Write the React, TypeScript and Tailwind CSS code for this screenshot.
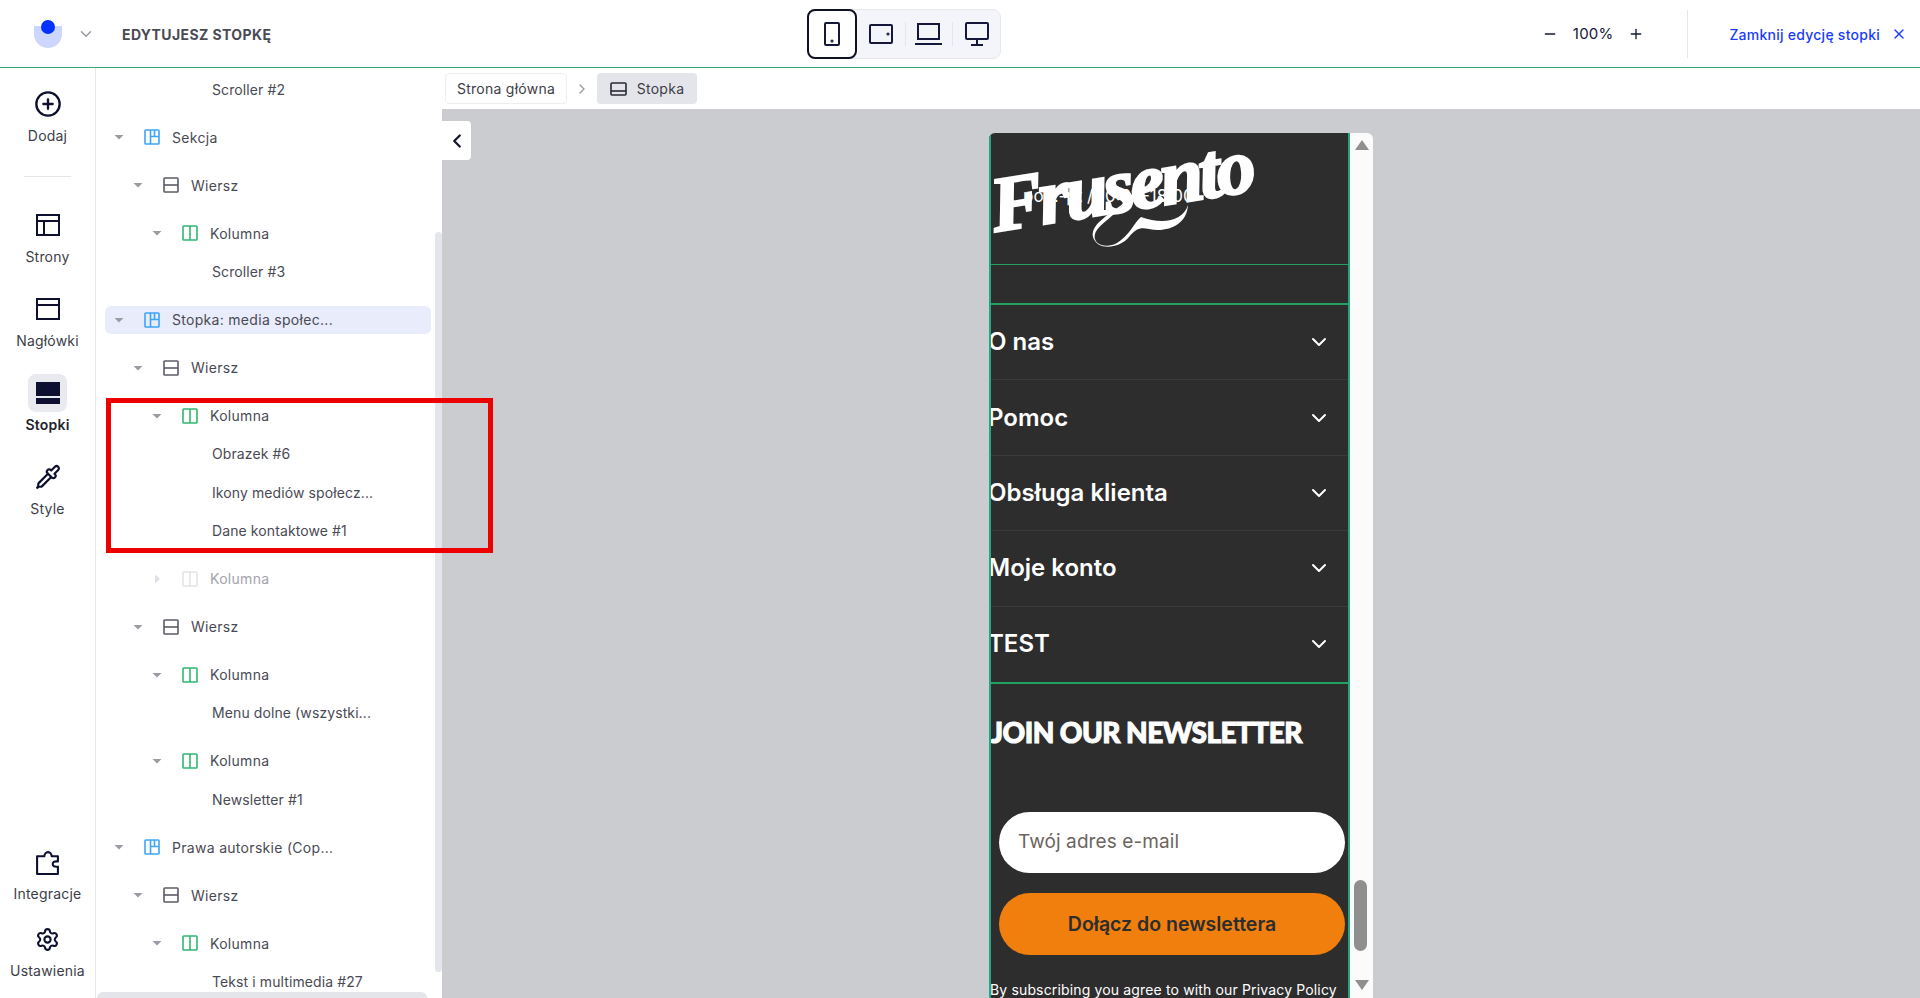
import { ChevronDown, ChevronLeft, ChevronRight, CirclePlus, Minus, Pipette, Plus, Settings, X } from "lucide-react"
import type { ReactNode } from "react"

const ui = "font-['Inter',sans-serif]"

type Kind = "section" | "row" | "col"
type Item =
  | { type: "branch"; depth: 0 | 1 | 2; kind: Kind; label: string; active?: boolean; dim?: boolean; closed?: boolean }
  | { type: "leaves"; labels: string[] }

const tree: Item[] = [
  { type: "leaves", labels: ["Scroller #2"] },
  { type: "branch", depth: 0, kind: "section", label: "Sekcja" },
  { type: "branch", depth: 1, kind: "row", label: "Wiersz" },
  { type: "branch", depth: 2, kind: "col", label: "Kolumna" },
  { type: "leaves", labels: ["Scroller #3"] },
  { type: "branch", depth: 0, kind: "section", label: "Stopka: media społec...", active: true },
  { type: "branch", depth: 1, kind: "row", label: "Wiersz" },
  { type: "branch", depth: 2, kind: "col", label: "Kolumna" },
  { type: "leaves", labels: ["Obrazek #6", "Ikony mediów społecz...", "Dane kontaktowe #1"] },
  { type: "branch", depth: 2, kind: "col", label: "Kolumna", dim: true, closed: true },
  { type: "branch", depth: 1, kind: "row", label: "Wiersz" },
  { type: "branch", depth: 2, kind: "col", label: "Kolumna" },
  { type: "leaves", labels: ["Menu dolne (wszystki..."] },
  { type: "branch", depth: 2, kind: "col", label: "Kolumna" },
  { type: "leaves", labels: ["Newsletter #1"] },
  { type: "branch", depth: 0, kind: "section", label: "Prawa autorskie (Cop..." },
  { type: "branch", depth: 1, kind: "row", label: "Wiersz" },
  { type: "branch", depth: 2, kind: "col", label: "Kolumna" },
  { type: "leaves", labels: ["Tekst i multimedia #27"] },
]

const accordion = ["O nas", "Pomoc", "Obsługa klienta", "Moje konto", "TEST"]

function KindIcon({ kind, dim }: { kind: Kind; dim?: boolean }) {
  const color = dim ? "#e4e5ea" : kind === "section" ? "#3ea6f5" : kind === "row" ? "#5c5c66" : "#2fb872"
  return (
    <svg width="16" height="16" viewBox="0 0 16 16" fill="none" stroke={color} strokeWidth="1.6" className="shrink-0">
      <rect x="1" y="1" width="14" height="14" rx="0.8" />
      {kind === "section" && <path d="M6.5 1v14M6.5 7.5H15M10.5 1v6.5" />}
      {kind === "row" && <path d="M1 8h14" />}
      {kind === "col" && <path d="M8 1v14" />}
    </svg>
  )
}

function Caret({ closed, dim }: { closed?: boolean; dim?: boolean }) {
  return (
    <svg width="10" height="10" viewBox="0 0 10 10" className="shrink-0" fill={dim ? "#dfe0e5" : "#9b9ba3"}>
      {closed ? <path d="M3 0.5 8 5 3 9.5z" /> : <path d="M0.5 3h9L5 7.5z" />}
    </svg>
  )
}

function Branch({ item }: { item: Extract<Item, { type: "branch" }> }) {
  const pad = item.depth === 0 ? "pl-[9px]" : item.depth === 1 ? "pl-[28px]" : "pl-[47px]"
  return (
    <div className="h-[48px] flex items-center ml-[9px] w-[326px]">
      <div className={`h-[28px] w-full flex items-center rounded-md ${pad} ${item.active ? "bg-[#e9ecfb]" : ""}`}>
        <Caret closed={item.closed} dim={item.dim} />
        <span className="ml-[20px]">
          <KindIcon kind={item.kind} dim={item.dim} />
        </span>
        <span className={`ml-[12px] text-[14px] tracking-[0.3px] whitespace-nowrap ${item.dim ? "text-[#a3a3ab]" : "text-[#4a4a55]"}`}>{item.label}</span>
      </div>
    </div>
  )
}

function RailItem({ icon, label, active, short }: { icon: ReactNode; label: string; active?: boolean; short?: boolean }) {
  return (
    <div className={`flex flex-col items-center pt-[6px] ${short ? "h-[77px]" : "h-[84px]"}`}>
      <div className={`w-[39px] h-[38px] flex items-center justify-center rounded-lg text-[#0d1030] ${active ? "bg-[#e9eaef]" : ""}`}>{icon}</div>
      <div className={`mt-[3px] text-[14px] tracking-[0.2px] leading-5 whitespace-nowrap ${active ? "font-semibold text-[#23232b]" : "text-[#3d3d48]"}`}>{label}</div>
    </div>
  )
}

function Rail() {
  const box = { width: 24, height: 24, viewBox: "0 0 24 24", fill: "none", stroke: "currentColor", strokeWidth: 2 }
  return (
    <aside className="w-[96px] shrink-0 border-r border-[#e5e6ea] flex flex-col pt-[11px]">
      <RailItem label="Dodaj" icon={<CirclePlus size={28} strokeWidth={2} />} />
      <div className="mt-[13px] mx-[24px] h-px bg-[#e5e6ea]" />
      <div className="mt-[23px]">
        <RailItem
          label="Strony"
          icon={
            <svg {...box}>
              <rect x="1" y="2" width="22" height="20" />
              <path d="M1 8h22M8 8v14" />
            </svg>
          }
        />
        <RailItem
          label="Nagłówki"
          icon={
            <svg {...box}>
              <rect x="1" y="2" width="22" height="20" />
              <path d="M1 8h22" />
            </svg>
          }
        />
        <RailItem
          active
          label="Stopki"
          icon={
            <svg width="24" height="22" viewBox="0 0 24 22" fill="currentColor">
              <path d="M0 0h24v14H0zM0 16h24v6H0z" />
            </svg>
          }
        />
        <RailItem label="Style" icon={<Pipette size={26} strokeWidth={2} />} />
      </div>
      <div className="mt-auto pb-[7px]">
        <RailItem
          short
          label="Integracje"
          icon={
            <svg {...box} width={25} height={25} strokeLinejoin="round">
              <path d="M2 23V6h7c0-2 1.5-4 3.5-4S16 4 16 6h6v5c-4-.5-5 1-5 2.5s1 3 5 2.5v7z" />
            </svg>
          }
        />
        <RailItem short label="Ustawienia" icon={<Settings size={25} strokeWidth={2} />} />
      </div>
    </aside>
  )
}

function TreePanel() {
  return (
    <div className="w-[346px] shrink-0 relative overflow-hidden pt-[2px]">
      {tree.map((item, i) =>
        item.type === "branch" ? (
          <Branch key={i} item={item} />
        ) : (
          <div key={i} className={`mb-[5px] ${i === 0 ? "" : "-mt-[5px]"}`}>
            {item.labels.map((label) => (
              <div key={label} className="h-[38.33px] flex items-center pl-[116px] text-[14px] tracking-[0.1px] text-[#4a4a55] whitespace-nowrap">
                {label}
              </div>
            ))}
          </div>
        ),
      )}
      <div className="absolute right-0 top-[164px] h-[740px] w-[7px] rounded-full bg-[#e4e5ea]" />
      <div className="absolute left-px bottom-0 h-[6px] w-[330px] rounded-t-md bg-[#e4e5ea]" />
    </div>
  )
}

function Logo() {
  return (
    <div className="absolute left-0 top-0 w-[300px] h-[130px] pointer-events-none">
      <svg width="300" height="130" viewBox="0 0 300 130" fill="none" className="absolute left-0 top-0">
        <path d="M135 68C124 84 108 90 104 101C101 112 116 116 126 110C138 103 143 90 150 84C172 92 192 88 197 72C196 92 176 100 158 96C150 94 145 95 138 104C128 116 106 118 102 104C99 90 122 80 135 68Z" fill="white" />
      </svg>
      <span className="absolute left-0 top-[34px] rotate-[-9deg] origin-left font-['Liberation_Serif',serif] italic font-bold text-[78px] leading-none tracking-[-4px] text-white [-webkit-text-stroke:2.5px_white] whitespace-nowrap">
        Frusento
      </span>
    </div>
  )
}

function Preview() {
  return (
    <div className="ml-[547px] mt-[24px] w-[384px] flex-1 flex min-h-0 rounded-t-md overflow-hidden">
      <div className="w-[361px] bg-[#2d2d2d] text-white border-x-2 border-[#22a77f] overflow-hidden font-['Inter',sans-serif]">
        <div className="relative h-[132px] border-b border-[#22a160]">
          <div className="absolute left-[32px] top-[53px] text-[17px] leading-5 whitespace-nowrap">pon.-pt / 10:00-18:00</div>
          <Logo />
        </div>
        <div className="h-[38px] -mx-[2px] border-x-2 border-[#3a9df0]" />
        <div className="-mx-[2px] border-y-2 border-[#22a160]">
          {accordion.map((label, i) => (
            <div key={label} className={`h-[75.4px] flex items-center justify-between pr-[19px] ${i < 4 ? "border-b border-[#3a3a3a]" : ""}`}>
              <span className="-ml-px text-[24px] font-semibold">{label}</span>
              <ChevronDown size={24} strokeWidth={2} />
            </div>
          ))}
        </div>
        <div className="mt-[30.5px] font-['Lato',sans-serif] font-black text-[28px] tracking-[-0.55px] leading-9 text-white [-webkit-text-stroke:1px_white] whitespace-nowrap">JOIN OUR NEWSLETTER</div>
        <div className="mt-[62px] ml-[8px] mr-[3px] flex flex-col gap-[20px]">
          <input readOnly placeholder="Twój adres e-mail" className="h-[61px] w-full rounded-full bg-white pl-[19px] pb-[3px] text-[19px] tracking-[0.1px] text-[#6b655e] placeholder:text-[#6b655e] outline-none" />
          <button className="h-[62px] w-full rounded-full bg-[#f07f0e] text-[19.5px] font-semibold text-[#2d2d2d]">Dołącz do newslettera</button>
        </div>
        <div className="mt-[25px] -ml-[1px] text-[14px] tracking-[0.15px] leading-5 whitespace-nowrap">By subscribing you agree to with our Privacy Policy</div>
      </div>
      <div className="flex-1 bg-[#fbfbfb] relative">
        <div className="absolute left-[5px] top-[7px] w-0 h-0 border-x-[7px] border-x-transparent border-b-[10px] border-b-[#8f8f8f]" />
        <div className="absolute left-[4px] top-[747px] h-[71px] w-[13px] rounded-full bg-[#8f8f8f]" />
        <div className="absolute left-[5px] top-[847px] w-0 h-0 border-x-[7px] border-x-transparent border-t-[10px] border-t-[#8f8f8f]" />
      </div>
    </div>
  )
}

function Canvas() {
  return (
    <main className="flex-1 min-w-0 flex flex-col bg-[#cbccd0] relative">
      <div className="h-[41px] shrink-0 bg-white flex items-center pl-[3px] text-[14px] text-[#3d3d48]">
        <div className="h-[31px] w-[122px] flex items-center justify-center border border-[#eeeef1] rounded tracking-[0.25px]">Strona główna</div>
        <ChevronRight size={16} className="mx-[7px] text-[#9b9ba3]" />
        <div className="h-[31px] w-[100px] flex items-center justify-center gap-[10px] bg-[#e4e5ea] rounded tracking-[0.3px]">
          <svg width="17" height="14" viewBox="0 0 17 14" fill="none" stroke="#2a2a35" strokeWidth="1.6">
            <rect x="1" y="1" width="15" height="12" rx="1" />
            <path d="M1 9h15" />
          </svg>
          Stopka
        </div>
      </div>
      <div className="absolute left-0 top-[53px] w-[29px] h-[39px] bg-white flex items-center justify-center rounded-r-sm">
        <ChevronLeft size={22} strokeWidth={2.5} className="text-[#14162e]" />
      </div>
      <Preview />
    </main>
  )
}

function DeviceBar() {
  return (
    <div className="w-[194px] h-[50px] flex items-center rounded-lg border border-[#e8e9ee] bg-[#f4f5fa] text-[#15183a]">
      <div className="w-[50px] h-[50px] -ml-px flex items-center justify-center rounded-lg border-2 border-[#0f1124] bg-white">
        <svg width="16" height="24" viewBox="0 0 16 24" fill="none" stroke="currentColor" strokeWidth="2">
          <rect x="1" y="1" width="14" height="22" rx="1" />
          <circle cx="8" cy="19" r="0.6" />
        </svg>
      </div>
      <div className="w-[48px] flex justify-center">
        <svg width="24" height="20" viewBox="0 0 24 20" fill="none" stroke="currentColor" strokeWidth="2">
          <rect x="1" y="1" width="22" height="18" rx="1" />
          <circle cx="19" cy="10" r="0.6" />
        </svg>
      </div>
      <div className="w-px h-[24px] bg-[#e4e5ea]" />
      <div className="w-[47px] flex justify-center">
        <svg width="27" height="22" viewBox="0 0 27 22" fill="none" stroke="currentColor" strokeWidth="2">
          <path d="M3 16V1h21v15zM0 21h27" />
        </svg>
      </div>
      <div className="w-px h-[24px] bg-[#e4e5ea]" />
      <div className="w-[47px] flex justify-center">
        <svg width="24" height="24" viewBox="0 0 24 24" fill="none" stroke="currentColor" strokeWidth="2">
          <rect x="1" y="1" width="22" height="16" rx="1" />
          <path d="M12 17v6M6 23h12" />
        </svg>
      </div>
    </div>
  )
}

export default function App() {
  return (
    <div className={`h-[998px] w-[1920px] flex flex-col overflow-hidden bg-white ${ui}`}>
      <header className="h-[68px] shrink-0 flex items-center border-b border-[#3aa676]">
        <div className="w-[807px] flex items-center pl-[34px]">
          <div className="relative w-[28px] h-[28px]">
            <div className="mt-[6px] h-[22px] rounded-b-full rounded-t-[9px] bg-[#cdd6ff]" />
            <div className="absolute left-[7px] top-0 w-[14px] h-[14px] rounded-full bg-[#0433ff]" />
          </div>
          <ChevronDown size={18} className="ml-[15px] text-[#9b9ba3]" />
          <span className="ml-[27px] pt-[2px] text-[14px] tracking-[0.4px] font-bold text-[#4a4a55]">EDYTUJESZ STOPKĘ</span>
        </div>
        <DeviceBar />
        <div className="flex-1 flex items-center justify-end pt-[1px] text-[#15183a]">
          <Minus size={16} strokeWidth={2} />
          <span className="mx-[15px] text-[15px] tracking-[0.2px]">100%</span>
          <Plus size={16} strokeWidth={2} />
          <div className="ml-[43px] mr-[41px] w-px h-[48px] bg-[#e5e6ea]" />
          <span className="text-[14px] tracking-[0.25px] font-medium text-[#1a3cff]">Zamknij edycję stopki</span>
          <X size={16} strokeWidth={2} className="ml-[11px] mr-[13px] text-[#1a3cff]" />
        </div>
      </header>
      <div className="flex-1 min-h-0 flex relative">
        <Rail />
        <TreePanel />
        <Canvas />
        <div className="absolute left-[106px] top-[330px] w-[387px] h-[155px] border-[5px] border-[#ec0000] pointer-events-none" />
      </div>
    </div>
  )
}
